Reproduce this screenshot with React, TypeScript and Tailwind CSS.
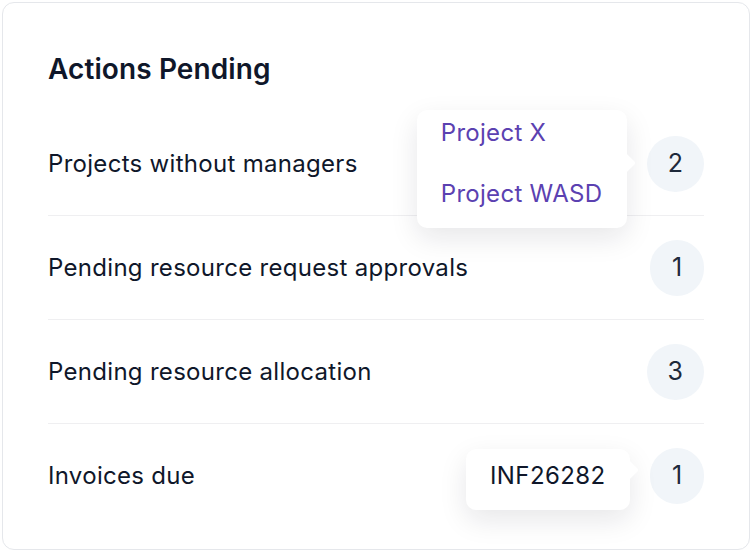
import React from 'react';

type Row = {
  label: string;
  count: number;
  popover?: 'projects' | 'invoice';
};

const ROWS: Row[] = [
  { label: 'Projects without managers', count: 2, popover: 'projects' },
  { label: 'Pending resource request approvals', count: 1 },
  { label: 'Pending resource allocation', count: 3 },
  { label: 'Invoices due', count: 1, popover: 'invoice' },
];

function Arrow({ top }: { top: string }) {
  return (
    <div
      className={`absolute right-[-6px] ${top} w-[14px] h-[14px] bg-white rotate-45 rounded-[2px]`}
    ></div>
  );
}

function ProjectsPopover() {
  return (
    <div className="absolute right-full mr-[20px] top-[-26px] w-[210px] bg-white rounded-[10px] shadow-[0_10px_28px_rgba(15,23,42,0.10)] z-10">
      <Arrow top="top-[46px]" />
      <div className="relative flex flex-col gap-[31px] pt-[8px] pb-[19px] px-[24px] text-[24px] leading-[30px] tracking-[0.3px] text-[#5b41b1]">
        <span>Project X</span>
        <span>Project WASD</span>
      </div>
    </div>
  );
}

function InvoicePopover() {
  return (
    <div className="absolute right-full mr-[20px] top-[1px] w-[164px] bg-white rounded-[10px] shadow-[0_10px_28px_rgba(15,23,42,0.10)] z-10">
      <Arrow top="top-[14px]" />
      <div className="relative pt-[12px] pb-[19px] px-[24px] text-[24px] leading-[30px] tracking-[0.4px] text-[#0f172a]">
        INF26282
      </div>
    </div>
  );
}

export default function App() {
  return (
    <div className="w-[752px] h-[558px] bg-white p-[2px] pb-[8px] font-['Inter','Liberation_Sans',sans-serif]">
      <div className="h-full border border-[#e5e7eb] rounded-[12px] bg-white px-[45px] pt-[49px]">
        <h2 className="text-[28px] leading-[34px] font-semibold text-[#0f172a] tracking-[0.1px]">
          Actions Pending
        </h2>
        <div className="mt-[26px] flex flex-col">
          {ROWS.map((row, i) => (
            <div
              key={row.label}
              className={`h-[104px] flex items-center justify-between ${
                i < ROWS.length - 1 ? 'border-b border-[#efeff1]' : ''
              }`}
            >
              <span className="text-[24px] tracking-[0.3px] text-[#0f172a]">{row.label}</span>
              <div className="relative">
                {row.popover === 'projects' && <ProjectsPopover />}
                {row.popover === 'invoice' && <InvoicePopover />}
                <div className="h-[56px] min-w-[54px] px-[21px] rounded-full bg-[#f1f5f9] flex items-center justify-center text-[25px] text-[#1e293b]">
                  {row.count}
                </div>
              </div>
            </div>
          ))}
        </div>
      </div>
    </div>
  );
}
